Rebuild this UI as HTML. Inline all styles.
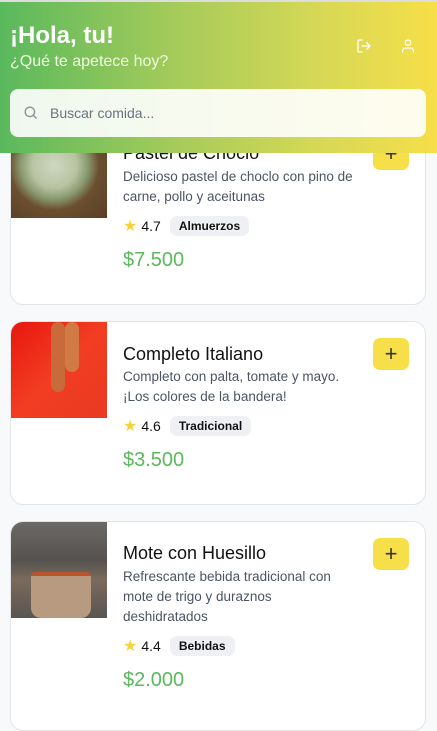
<!DOCTYPE html>
<html><head><meta charset="utf-8"><style>
*{margin:0;padding:0;box-sizing:border-box}
body{width:437px;height:716px;overflow:hidden;background:#f8f9fa;font-family:"Liberation Sans",sans-serif;position:relative}
.card{position:absolute;left:10px;width:416px;background:#fff;border:1px solid #e3e5e8;border-radius:13px;overflow:hidden}
.img{position:absolute;left:0;top:0;width:96px;height:96px}
.t{position:absolute;left:112px;font-size:18px;color:#111}
.d{position:absolute;left:112px;width:230px;font-size:13.5px;line-height:20px;color:#4b5563}
.r{position:absolute;left:112px;font-size:14px;color:#111;display:flex;align-items:center}
.r .s{color:#f5d33a;font-size:16px;margin-right:4px}
.tag{margin-left:9px;background:#eef0f3;border-radius:7px;padding:3px 9px;font-size:12px;font-weight:bold}
.p{position:absolute;left:112px;font-size:20px;color:#5cb85c}
.b{position:absolute;left:362px;width:36px;height:32px;background:#f7df4a;border-radius:7px;font-size:22px;line-height:31px;text-align:center;color:#333}
.h{position:absolute;left:0;top:0;width:437px;height:153px;background:linear-gradient(90deg,#5ab95d,#a5cb5a 40%,#d9d955 75%,#f6df48);border-top:2px solid #ddd}
</style></head><body>
<div class="card" style="top:121px;height:184px">
<div class="img" style="background:radial-gradient(circle at 45% 45%,#cfd8c0 0,#b7c4a2 30%,#8a9a70 45%,#6b4f30 60%,#5a3e25 100%)"></div>
<div class="t" style="top:21px">Pastel de Choclo</div>
<div class="d" style="top:45px">Delicioso pastel de choclo con pino de carne, pollo y aceitunas</div>
<div class="r" style="top:94px"><span class="s">★</span>4.7<span class="tag">Almuerzos</span></div>
<div class="p" style="top:127px">$7.500</div>
<div class="b" style="top:16px">+</div>
</div>
<div class="card" style="top:321px;height:184px">
<div class="img" style="background:linear-gradient(135deg,#e8160f,#f23d22 50%,#e83a22)"><div style="position:absolute;left:40px;top:0;width:14px;height:70px;background:#c86a3a;border-radius:7px"></div><div style="position:absolute;left:54px;top:0;width:14px;height:50px;background:#d27a45;border-radius:7px"></div></div>
<div class="t" style="top:22px">Completo Italiano</div>
<div class="d" style="top:45px">Completo con palta, tomate y mayo. ¡Los colores de la bandera!</div>
<div class="r" style="top:94px"><span class="s">★</span>4.6<span class="tag">Tradicional</span></div>
<div class="p" style="top:127px">$3.500</div>
<div class="b" style="top:16px">+</div>
</div>
<div class="card" style="top:521px;height:210px">
<div class="img" style="background:linear-gradient(180deg,#6b6966,#55524f 40%,#7a6a5c 60%,#5a5551)"><div style="position:absolute;left:20px;top:50px;width:60px;height:46px;background:#b89a80;border-radius:4px 4px 10px 10px;border-top:4px solid #b8552a"></div></div>
<div class="t" style="top:21px">Mote con Huesillo</div>
<div class="d" style="top:45px">Refrescante bebida tradicional con mote de trigo y duraznos deshidratados</div>
<div class="r" style="top:114px"><span class="s">★</span>4.4<span class="tag">Bebidas</span></div>
<div class="p" style="top:147px">$2.000</div>
<div class="b" style="top:16px">+</div>
</div>
<div class="h">
<div style="position:absolute;left:10px;top:20px;font-size:24px;font-weight:bold;color:#fff">¡Hola, tu!</div>
<div style="position:absolute;left:10px;top:51px;font-size:16px;color:#f0fae0">¿Qué te apetece hoy?</div>
<svg style="position:absolute;left:356px;top:36px" width="16" height="16" viewBox="0 0 24 24" fill="none" stroke="#fff" stroke-width="2" stroke-linecap="round" stroke-linejoin="round"><path d="M9 21H5a2 2 0 0 1-2-2V5a2 2 0 0 1 2-2h4M16 17l5-5-5-5M21 12H9"/></svg>
<svg style="position:absolute;left:400px;top:36px" width="16" height="16" viewBox="0 0 24 24" fill="none" stroke="#fff" stroke-width="2" stroke-linecap="round"><circle cx="12" cy="7" r="4"/><path d="M20 21v-2a4 4 0 0 0-4-4H8a4 4 0 0 0-4 4v2"/></svg>
<div style="position:absolute;left:10px;top:87px;width:416px;height:48px;background:rgba(255,255,255,.9);border-radius:8px">
<svg style="position:absolute;left:13px;top:16px" width="15" height="15" viewBox="0 0 24 24" fill="none" stroke="#8a8f98" stroke-width="2.2" stroke-linecap="round"><circle cx="11" cy="11" r="7.5"/><path d="M21 21l-4.5-4.5"/></svg>
<div style="position:absolute;left:40px;top:16px;font-size:14px;color:#6b7280">Buscar comida...</div>
</div>
</div>
</body></html>
